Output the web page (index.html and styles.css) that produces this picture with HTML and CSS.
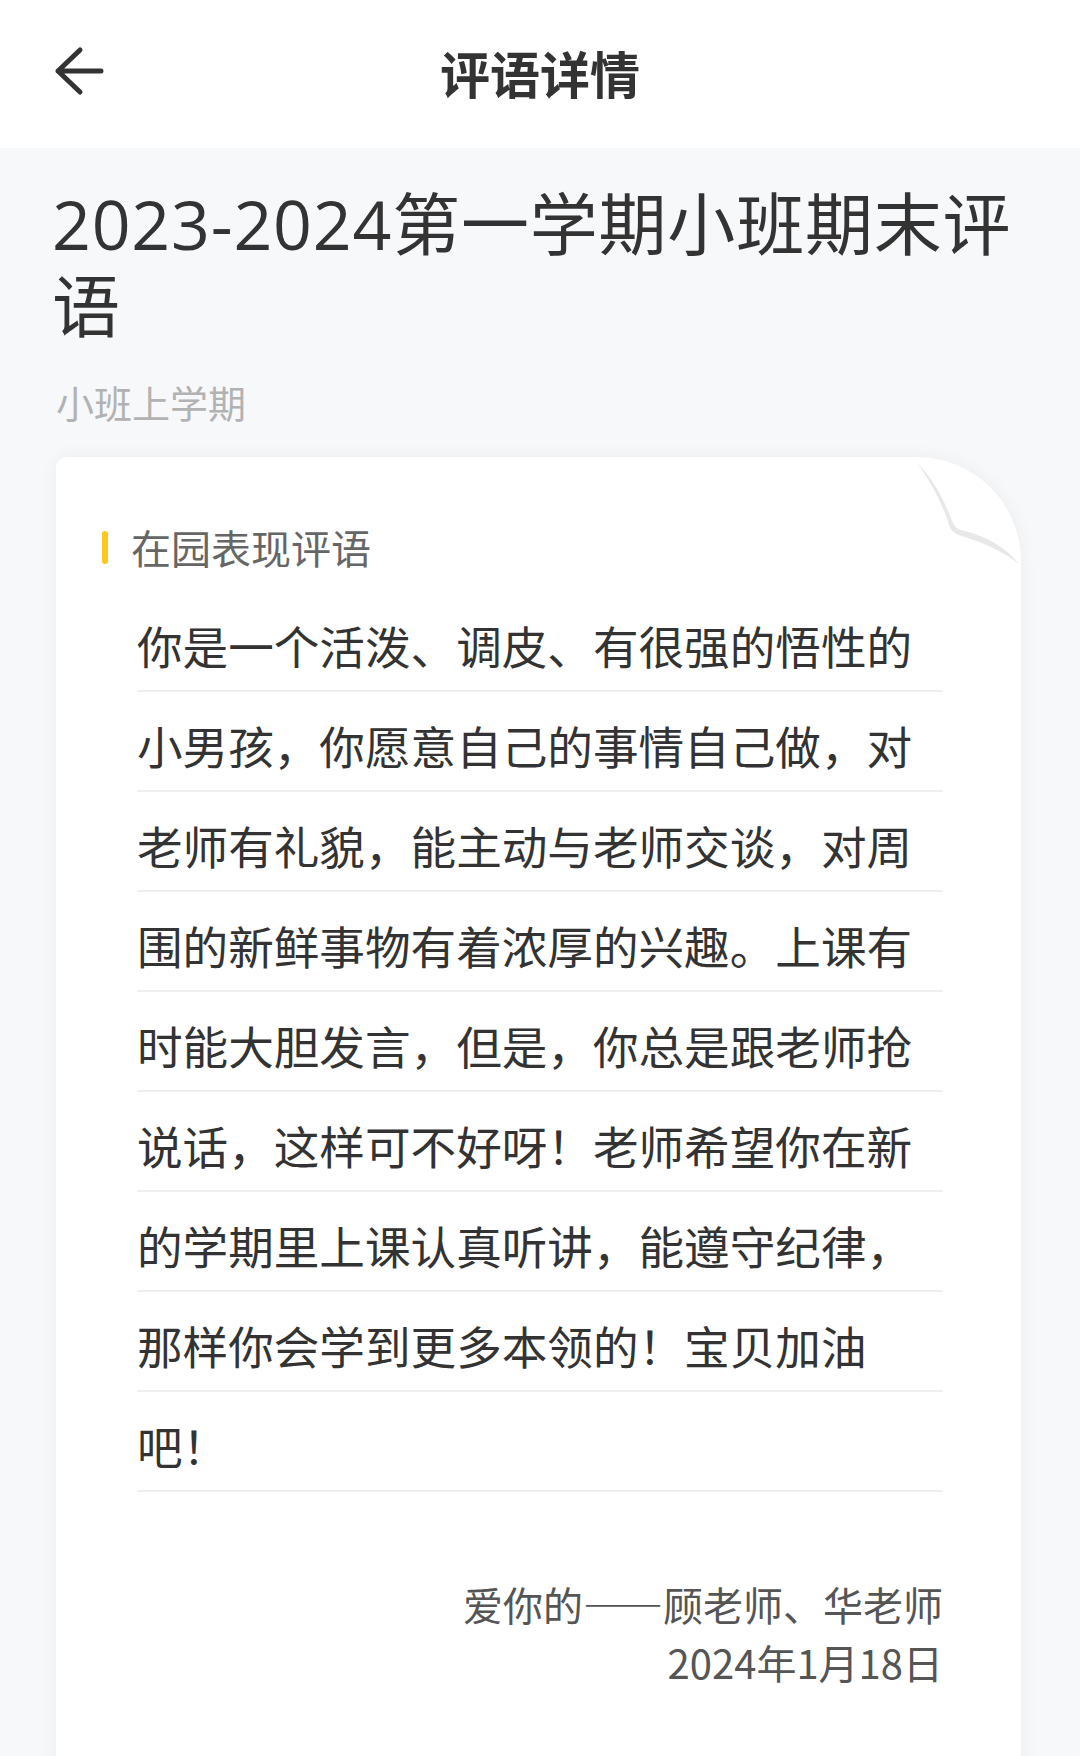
FILE: index.html
```html
<!DOCTYPE html>
<html lang="zh-CN">
<head>
<meta charset="utf-8">
<title>评语详情</title>
<link rel="stylesheet" href="styles.css">
</head>
<body>
<header class="topbar">
  <button class="back" aria-label="返回">
    <svg viewBox="0 0 50 50" width="50" height="50"><path d="M26 4 L4 25 L26 46 M4 25 H47" fill="none" stroke="#333" stroke-width="5" stroke-linecap="round" stroke-linejoin="round"/></svg>
  </button>
  <h1 class="topbar-title">评语详情</h1>
  <span class="topbar-spacer"></span>
</header>
<main class="page">
  <h2 class="report-title">2023-2024第一学期小班期末评语</h2>
  <p class="report-term">小班上学期</p>
  <section class="card">
    <svg class="curl" viewBox="0 0 112 112" width="112" height="112"><path d="M7 5 C25 22 36 45 44 66 C46 71 50 73 56 74 C80 80 98 92 110 107 C96 96 78 87 56 80 C48 78 42 75 40 68 C34 48 22 24 7 5 Z" fill="#e8e8e8"/></svg>
    <div class="section-label"><span class="bar"></span>在园表现评语</div>
    <div class="lines">
      <p class="line">你是一个活泼、调皮、有很强的悟性的</p>
      <p class="line">小男孩，你愿意自己的事情自己做，对</p>
      <p class="line">老师有礼貌，能主动与老师交谈，对周</p>
      <p class="line">围的新鲜事物有着浓厚的兴趣。上课有</p>
      <p class="line">时能大胆发言，但是，你总是跟老师抢</p>
      <p class="line">说话，这样可不好呀！老师希望你在新</p>
      <p class="line">的学期里上课认真听讲，能遵守纪律，</p>
      <p class="line">那样你会学到更多本领的！宝贝加油</p>
      <p class="line">吧！</p>
    </div>
    <div class="signature">
      <p>爱你的——顾老师、华老师</p>
      <p>2024年1月18日</p>
    </div>
  </section>
</main>
</body>
</html>
```

FILE: styles.css
```css
* { box-sizing: border-box; }
html, body {
  margin: 0;
  padding: 0;
}
body {
  width: 1080px;
  min-height: 1756px;
  background: #f7f8fa;
  font-family: "Noto Sans CJK SC", "Noto Sans", sans-serif;
  color: #333;
  overflow: hidden;
}
p, h1, h2 { margin: 0; }

.topbar {
  height: 148px;
  background: #fff;
  display: grid;
  grid-template-columns: 1fr auto 1fr;
  align-items: center;
  padding: 0 54px;
}
.back {
  justify-self: start;
  border: 0;
  background: none;
  padding: 0;
  width: 50px;
  height: 50px;
  margin-top: -6px;
}
.back svg { display: block; }
.topbar-title {
  font-size: 50px;
  font-weight: 700;
  color: #333;
  line-height: 60px;
  margin-top: -4px;
}

.page {
  padding: 35px 59px 0 56px;
}
.report-title {
  font-family: "Open Sans", "Noto Sans CJK SC", sans-serif;
  font-size: 68px;
  font-weight: 400;
  line-height: 82px;
  color: #333;
  margin-left: -4px;
  letter-spacing: 0.8px;
}
.report-term {
  margin-top: 30px;
  font-size: 38px;
  line-height: 50px;
  color: #b2b2b2;
}

.card {
  position: relative;
  margin-top: 30px;
  background: #fff;
  border-radius: 10px 104px 0 0;
  box-shadow: 0 0 18px rgba(0, 0, 0, 0.05);
  padding: 70px 78px 200px 46px;
}
.curl {
  position: absolute;
  top: 0;
  right: 0;
}
.section-label {
  display: flex;
  align-items: center;
  gap: 23px;
  font-size: 40px;
  line-height: 40px;
  color: #666;
}
.bar {
  width: 6px;
  height: 33px;
  border-radius: 3px;
  background: #ffc81e;
}
.lines {
  margin: 25px 0 0 35px;
}
.line {
  height: 100px;
  padding-top: 8px;
  line-height: 90px;
  font-size: 45.6px;
  color: #333;
  white-space: nowrap;
  border-bottom: 2px solid #efefef;
}
.signature {
  margin: 83px 0 0 35px;
  text-align: right;
  font-size: 40px;
  line-height: 58px;
  color: #555;
}
```
